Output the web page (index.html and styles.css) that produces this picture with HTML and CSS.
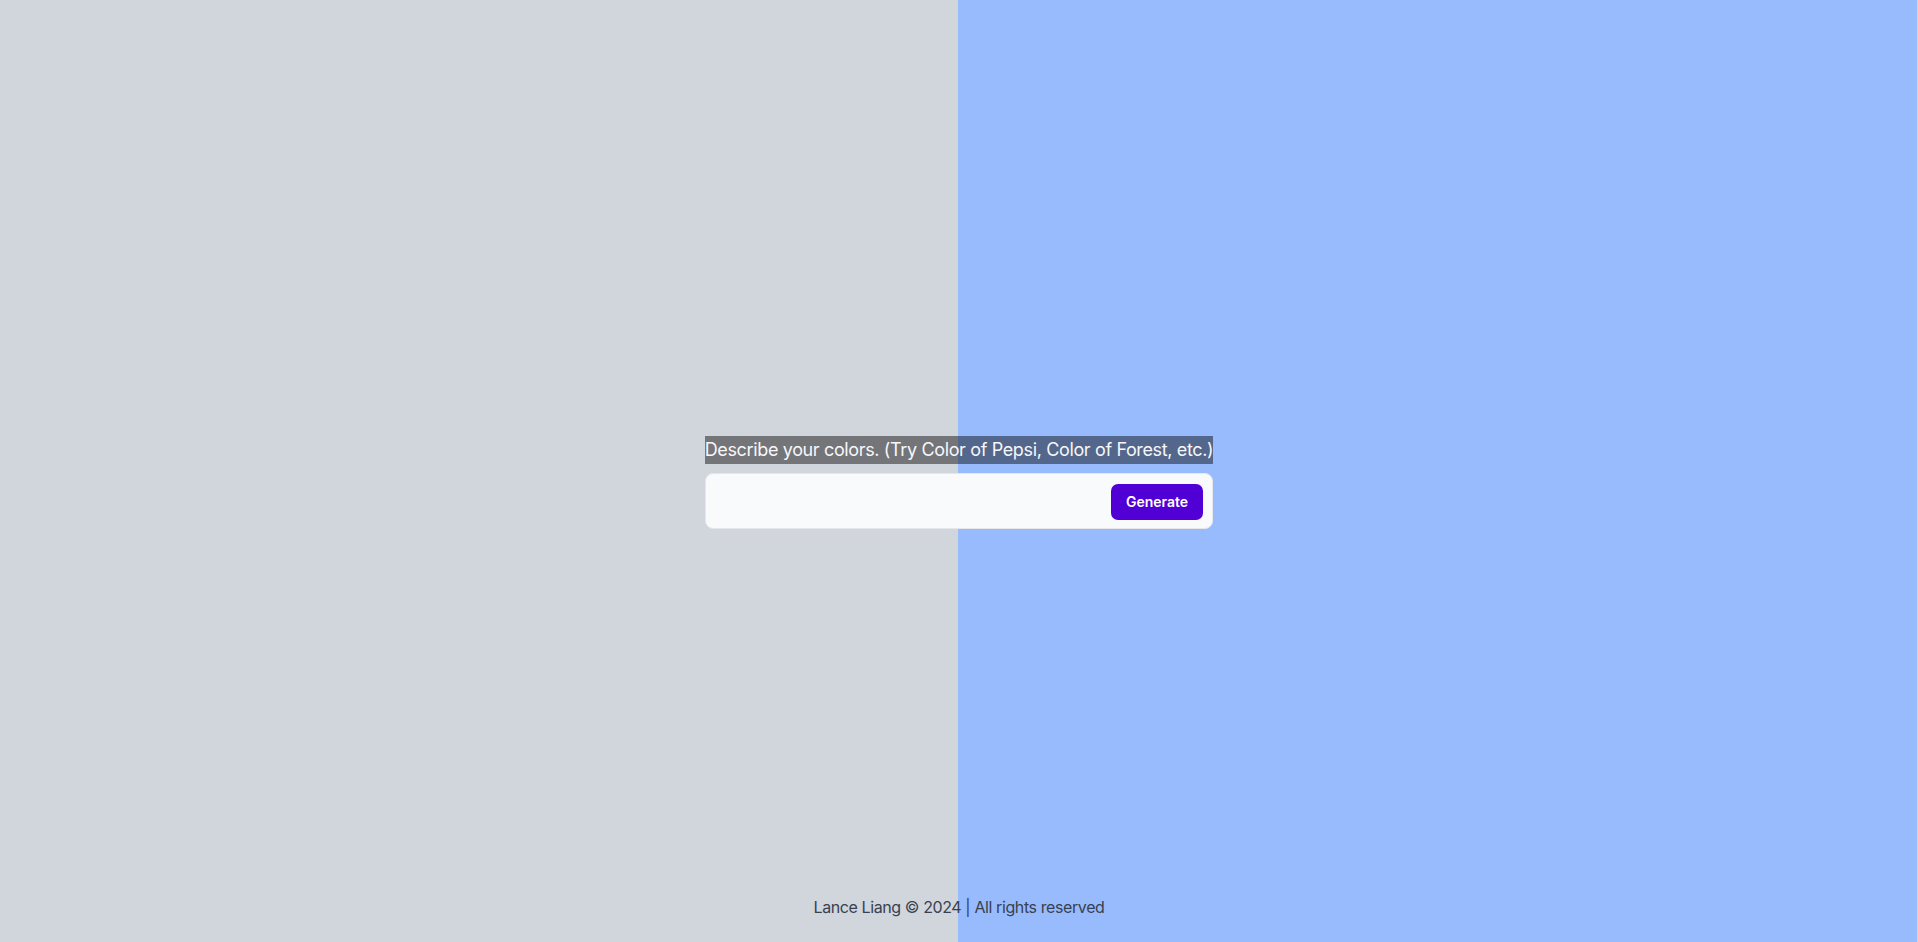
FILE: index.html
```html
<!DOCTYPE html>
<html lang="en">
<head>
<meta charset="utf-8">
<title>Color Generator</title>
<link rel="stylesheet" href="styles.css">
</head>
<body>
<div class="page">
  <main class="main">
    <div class="prompt">
      <span class="prompt-label">Describe your colors. (Try Color of Pepsi, Color of Forest, etc.)</span>
      <form class="prompt-form" onsubmit="return false;">
        <input class="prompt-input" type="text" aria-label="Describe your colors">
        <button class="prompt-button" type="submit">Generate</button>
      </form>
    </div>
  </main>
  <footer class="footer">Lance Liang © 2024 | All rights reserved</footer>
</div>
</body>
</html>
```

FILE: styles.css
```css
* { box-sizing: border-box; }
html, body { margin: 0; padding: 0; height: 100%; }
body {
  font-family: Inter, "Noto Sans", "Liberation Sans", sans-serif;
  background: linear-gradient(to right, #d1d5dc 0, #d1d5dc 958px, #97bbfd 958px, #97bbfd 1917px, #c4d8fe 1917px);
  overflow: hidden;
}
.page {
  height: 100vh;
  display: flex;
  flex-direction: column;
}
.main {
  flex: 1;
  padding-top: 436px;
}
.prompt {
  display: flex;
  flex-direction: column;
  align-items: center;
  gap: 9px;
}
.prompt-label {
  display: inline-block;
  background: rgba(0, 0, 0, 0.45);
  color: #f7f7f9;
  font-size: 18px;
  line-height: 28px;
  letter-spacing: -0.36px;
  padding: 0;
}
.prompt-form {
  width: 508px;
  height: 56px;
  margin: 0;
  display: flex;
  align-items: center;
  padding: 0 9px 0 12px;
  background: #f9fafb;
  border: 1px solid #e5e7eb;
  border-radius: 8px;
}
.prompt-input {
  flex: 1;
  min-width: 0;
  border: none;
  outline: none;
  background: transparent;
  font: inherit;
  font-size: 16px;
  height: 36px;
}
.prompt-button {
  height: 36px;
  width: 92px;
  margin-top: 1px;
  border: none;
  border-radius: 7px;
  background: #5000d5;
  color: #ffffff;
  font-family: inherit;
  font-size: 14px;
  font-weight: 600;
  cursor: pointer;
}
.footer {
  text-align: center;
  color: #374151;
  font-size: 16px;
  line-height: 24px;
  letter-spacing: -0.4px;
  padding-bottom: 23px;
}
```
